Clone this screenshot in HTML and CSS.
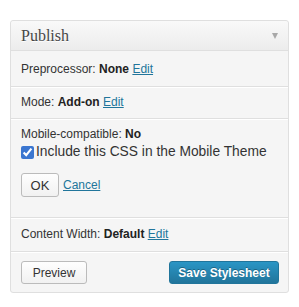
FILE: index.html
```html
<!DOCTYPE html>
<html>
<head>
<meta charset="utf-8">
<link rel="stylesheet" href="styles.css">
</head>
<body>
<div class="box">
  <div class="box-head">
    <h3 class="title">Publish</h3>
    <span class="toggle"></span>
  </div>
  <div class="section s1">Preprocessor: <b>None</b> <a href="#">Edit</a></div>
  <div class="section s2">Mode: <b>Add-on</b> <a href="#">Edit</a></div>
  <div class="section s3">
    <div class="line">Mobile-compatible: <b>No</b></div>
    <label class="line check"><input type="checkbox" checked>Include this CSS in the Mobile Theme</label>
    <div class="actions"><button class="btn ok">OK</button><a href="#">Cancel</a></div>
  </div>
  <div class="section s4">Content Width: <b>Default</b> <a href="#">Edit</a></div>
  <div class="footer">
    <button class="btn preview">Preview</button>
    <button class="btn primary">Save Stylesheet</button>
  </div>
</div>
</body>
</html>
```
FILE: styles.css
```css
html, body { margin: 0; padding: 0; background: #fff; }
body { font-family: "Liberation Sans", Arial, sans-serif; font-size: 12px; color: #333; }
.box {
  margin: 20px 0 0 10px;
  width: 277px;
  border: 1px solid #dfdfdf;
  border-radius: 3px;
  background: #f5f5f5;
}
.box-head {
  height: 29px;
  border-bottom: 1px solid #dfdfdf;
  background: linear-gradient(#f9f9f9, #ececec);
  border-radius: 3px 3px 0 0;
  display: flex;
  align-items: center;
  justify-content: space-between;
  padding: 0 10px;
}
.title {
  margin: 0;
  font-family: "Liberation Serif", "Times New Roman", serif;
  font-weight: normal;
  font-size: 16px;
  color: #464646;
  text-shadow: 0 1px 0 #fff;
}
.toggle {
  width: 0; height: 0;
  border-left: 3.5px solid transparent;
  border-right: 3.5px solid transparent;
  border-top: 6px solid #a8a8a8;
}
.section {
  padding: 0 10px;
  border-top: 1px solid #fff;
  border-bottom: 1px solid #dfdfdf;
  line-height: 16px;
}
.section b { color: #222; }
a { color: #21759b; text-decoration: underline; }
.s1 { padding-top: 10px; padding-bottom: 9px; border-top: none; }
.s2 { padding-top: 6px; padding-bottom: 8px; }
.s3 { padding-top: 6px; padding-bottom: 20px; }
.s4 { padding-top: 7px; padding-bottom: 9px; }
.line { display: block; }
.check { display: flex; align-items: center; margin-top: 2px; font-size: 13.8px; }
.check input {
  margin: 0 2px 0 0;
  width: 13px; height: 13px;
  accent-color: #3b76d0;
}
.actions { display: flex; align-items: center; gap: 4px; margin-top: 13px; font-size: 12px; }
.btn {
  font-family: "Liberation Sans", Arial, sans-serif;
  font-size: 12px;
  border-radius: 3px;
  padding: 0;
  cursor: pointer;
}
.ok, .preview {
  border: 1px solid #bbb;
  background: linear-gradient(#fefefe, #f1f1f1);
  color: #333;
}
.ok { width: 38px; height: 24px; font-size: 13px; }
.footer {
  border-top: 1px solid #fff;
  padding: 8px 9px 8px 10px;
  display: flex;
  justify-content: space-between;
  align-items: center;
}
.preview { width: 66px; height: 23px; }
.primary {
  width: 110px; height: 23px;
  border: 1px solid #21759b;
  background: linear-gradient(#2a95c5, #21759b);
  color: #fff;
  font-weight: bold;
  text-shadow: 0 -1px 0 rgba(0,0,0,0.3);
}
```
